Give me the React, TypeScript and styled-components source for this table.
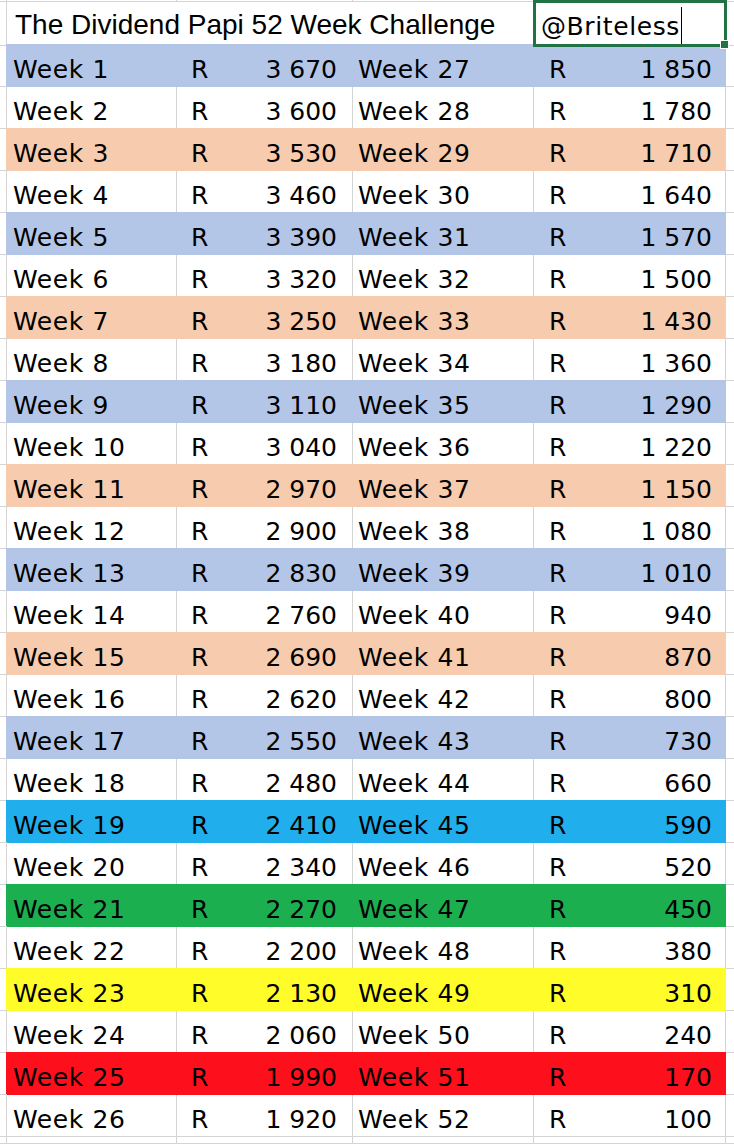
import React from "react";
import styled, { createGlobalStyle, css } from "styled-components";

const GRID = "#D4D4D4";
const SELECT = "#217346";
const COLS = "7px 170px 176px 181px 192px 1fr";

const BLUE = "#B4C6E7";
const PEACH = "#F7CBAD";
const CYAN = "#20AFEC";
const GREEN = "#1CAF50";
const YELLOW = "#FFFC2A";
const RED = "#FE0F1C";

const Global = createGlobalStyle`
  html, body { margin: 0; padding: 0; background: #fff; }
  body { width: 734px; height: 1144px; overflow: hidden; }
  * { box-sizing: border-box; }
`;

const Sheet = styled.div`
  width: 734px;
  height: 1144px;
  overflow: hidden;
  background: #fff;
  color: #000;
  font-family: "DejaVu Sans", "Open Sans", sans-serif;
  font-size: 25px;
`;

const Row = styled.div<{ $h: number }>`
  display: grid;
  grid-template-columns: ${COLS};
  height: ${(p) => p.$h}px;
`;

const Cell = styled.div<{ $fill?: string; $noRight?: boolean }>`
  height: 100%;
  border-right: 1px solid ${GRID};
  border-bottom: 1px solid ${GRID};
  white-space: nowrap;
  overflow: visible;
  ${(p) =>
    p.$noRight &&
    css`
      border-right: none;
    `}
  ${(p) =>
    p.$fill &&
    css`
      background: ${p.$fill};
      border-color: ${p.$fill};
      box-shadow: -1px -1px 0 ${p.$fill}, 0 -1px 0 ${p.$fill};
      position: relative;
      z-index: 1;
    `}
`;

const Gutter = styled(Cell)``;

const LabelCell = styled(Cell)<{ $pad: number }>`
  padding: 8px 0 0 ${(p) => p.$pad}px;
  line-height: 33px;
  letter-spacing: 0.6px;
`;

const AmountCell = styled(Cell)<{ $padL: number; $padR: number }>`
  display: flex;
  justify-content: space-between;
  padding: 8px ${(p) => p.$padR}px 0 ${(p) => p.$padL}px;
  line-height: 33px;
`;

const TitleCell = styled(Cell)`
  grid-column: span 3;
  padding: 7px 0 0 8px;
  font-family: "Liberation Sans", Arial, sans-serif;
  font-size: 28px;
  line-height: 32px;
`;

const EditCell = styled(Cell)`
  position: relative;
  display: flex;
  align-items: flex-start;
  padding-left: 7px;
  z-index: 2;
`;

const EditText = styled.span`
  padding-top: 8px;
  line-height: 33px;
  letter-spacing: 0.6px;
`;

const Caret = styled.span`
  width: 1px;
  height: 38px;
  margin-top: 5px;
  margin-left: 1px;
  background: #000;
`;

const Selection = styled.div`
  position: absolute;
  left: -1px;
  top: -2px;
  width: 194px;
  height: 47px;
  border: 3px solid ${SELECT};
  pointer-events: none;
`;

const FillHandle = styled.div`
  position: absolute;
  right: -5px;
  bottom: -5px;
  width: 9px;
  height: 9px;
  background: ${SELECT};
  border: 1px solid #fff;
`;

const fmt = (n: number) => {
  const s = String(n);
  return s.length > 3 ? `${s.slice(0, s.length - 3)} ${s.slice(-3)}` : s;
};

const fillFor = (n: number): string | undefined => {
  if (n === 19) return CYAN;
  if (n === 21) return GREEN;
  if (n === 23) return YELLOW;
  if (n === 25) return RED;
  if (n <= 17 && n % 4 === 1) return BLUE;
  if (n <= 15 && n % 4 === 3) return PEACH;
  return undefined;
};

const rows = Array.from({ length: 26 }, (_, i) => ({
  left: i + 1,
  leftAmt: 3670 - 70 * i,
  right: i + 27,
  rightAmt: 1850 - 70 * i,
  fill: fillFor(i + 1),
}));

const BlankRow: React.FC<{ h: number }> = ({ h }) => (
  <Row $h={h}>
    <Gutter />
    <Cell />
    <Cell />
    <Cell />
    <Cell />
    <Cell $noRight />
  </Row>
);

export default function App() {
  return (
    <>
      <Global />
      <Sheet>
        <BlankRow h={2} />
        <Row $h={43}>
          <Gutter />
          <TitleCell>The Dividend Papi 52 Week Challenge</TitleCell>
          <EditCell>
            <EditText>@Briteless</EditText>
            <Caret />
            <Selection>
              <FillHandle />
            </Selection>
          </EditCell>
          <Cell $noRight />
        </Row>
        {rows.map((r) => (
          <Row $h={42} key={r.left}>
            <Gutter />
            <LabelCell $pad={6} $fill={r.fill}>
              Week {r.left}
            </LabelCell>
            <AmountCell $padL={14} $padR={15} $fill={r.fill}>
              <span>R</span>
              <span>{fmt(r.leftAmt)}</span>
            </AmountCell>
            <LabelCell $pad={5} $fill={r.fill}>
              Week {r.right}
            </LabelCell>
            <AmountCell $padL={15} $padR={13} $fill={r.fill}>
              <span>R</span>
              <span>{fmt(r.rightAmt)}</span>
            </AmountCell>
            <Cell $noRight />
          </Row>
        ))}
        <BlankRow h={7} />
      </Sheet>
    </>
  );
}
